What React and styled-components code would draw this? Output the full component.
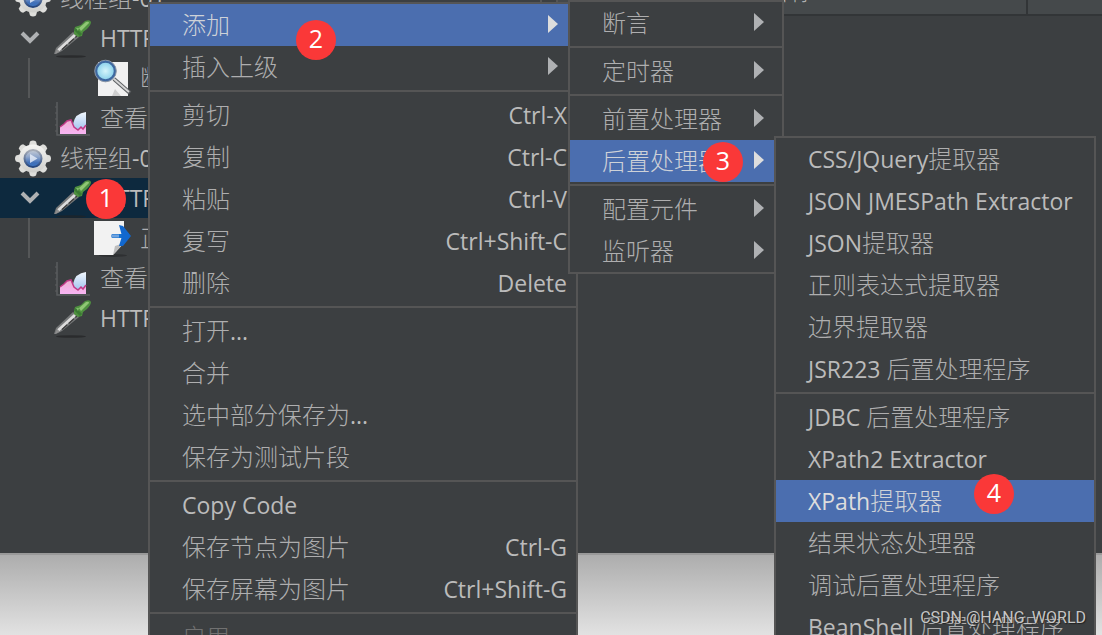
import React from "react";
import styled, { createGlobalStyle, css } from "styled-components";

const GlobalStyle = createGlobalStyle`
  * { box-sizing: border-box; }
  body {
    margin: 0;
    background: #3c3f41;
    color: #bbbbbb;
    font: 23px/40px "Open Sans", "Noto Sans CJK SC", sans-serif;
  }
  ul { list-style: none; margin: 0; padding: 0; }
  button { font: inherit; color: inherit; background: none; border: 0; padding: 0; }
`;

const Page = styled.div`
  position: relative;
  display: flex;
  flex-direction: column;
  height: 100vh;
  overflow: hidden;
`;

const Workspace = styled.main`
  flex: 1;
  min-height: 0;
  display: flex;
  border-bottom: 2px solid #999999;
`;

const Desktop = styled.footer`
  flex: 0 0 80px;
  background: linear-gradient(#adadad, #e2e2e2);
`;

const TreePane = styled.nav`
  flex: 0 0 49%;
  overflow: hidden;
`;

const Tree = styled.ul`
  margin-top: -22px;
`;

const TreeRow = styled.li`
  display: flex;
  align-items: center;
  height: 40px;
  padding-left: ${(p) => 13 + 40 * p.$level}px;
  white-space: nowrap;
  background: ${(p) => (p.$selected ? "#0d293e" : "transparent")};
`;

const Toggle = styled.button`
  display: flex;
  justify-content: center;
  width: 34px;
  margin-right: 6px;
`;

const Guide = styled.span`
  width: 2px;
  height: 40px;
  margin-left: 15px;
  margin-right: 63px;
  background: #555758;
`;

const TreeLabel = styled.span`
  margin-left: 7px;
`;

const Splitter = styled.div`
  flex: 0 0 18px;
  border: solid #555555;
  border-width: 0 2px;
`;

const Editor = styled.section`
  flex: 1;
  min-width: 0;
`;

const ColumnHeader = styled.div`
  display: flex;
  height: 16px;
  overflow: hidden;
  background: #45494b;
  border-bottom: 2px solid #323537;
`;

const ColumnCell = styled.div`
  flex: ${(p) => (p.$last ? "0 0 76px" : "1")};
  display: flex;
  align-items: flex-end;
  justify-content: center;
  line-height: 24px;
  padding-bottom: 11px;
  border-left: ${(p) => (p.$last ? "2px solid #323537" : "0")};
`;

const Menu = styled.ul`
  position: absolute;
  left: ${(p) => p.$left}px;
  top: ${(p) => p.$top}px;
  width: ${(p) => p.$width}px;
  background: #3c3f41;
  border: 2px solid #555555;
`;

const MenuItem = styled.button`
  display: flex;
  justify-content: space-between;
  align-items: center;
  width: 100%;
  height: 42px;
  padding: 0 9px 0 32px;
  text-align: left;
  white-space: nowrap;
  ${(p) => p.$active && css`background: #4b6eaf; color: #dddddd;`}
  &:disabled { color: #777777; }
`;

const Separator = styled.li`
  height: 6px;
  border: solid #3c3f41;
  border-width: 2px 0;
  background: #555555;
`;

const Han = styled.span`
  font-family: "Noto Sans CJK SC", sans-serif;
  font-size: 24px;
  font-weight: 300;
  line-height: 24px;
  opacity: 0.9;
`;

const ArrowSvg = styled.svg`
  margin: 0 9px 2px 0;
  fill: ${(p) => (p.$active ? "#dddddd" : "#afb1b3")};
`;

const Badge = styled.span`
  position: absolute;
  left: ${(p) => p.$left}px;
  top: ${(p) => p.$top}px;
  width: 40px;
  height: 40px;
  border-radius: 50%;
  background: #fa3838;
  color: #ffffff;
  font-size: 25px;
  line-height: 36px;
  text-align: center;
`;

const Watermark = styled.span`
  position: absolute;
  right: 16px;
  bottom: 7px;
  font: 16px/20px Roboto, "Liberation Sans", sans-serif;
  color: #c6c6c6;
  text-shadow: 1px 1px 1px #222222;
`;

function Label({ children }) {
  return (
    <span>
      {children.split(/([\u4e00-\u9fff]+)/).map((run, i) =>
        i % 2 ? <Han key={i}>{run}</Han> : run
      )}
    </span>
  );
}

const Arrow = ({ active }) => (
  <ArrowSvg width="10" height="18" viewBox="0 0 10 18" $active={active}>
    <path d="M0 0L10 9L0 18Z" />
  </ArrowSvg>
);

const Chevron = () => (
  <svg width="20" height="14" viewBox="0 0 20 14" fill="none" stroke="#afb1b3" strokeWidth="4">
    <path d="M2 2L10 10L18 2" />
  </svg>
);

const teeth = [0, 45, 90, 135, 180, 225, 270, 315];

const GearIcon = () => (
  <svg width="40" height="40" viewBox="0 0 40 40">
    <defs>
      <linearGradient id="gearBody" x1="0" y1="0" x2="0" y2="1">
        <stop offset="0" stopColor="#f4f4f2" />
        <stop offset="1" stopColor="#cfcfcc" />
      </linearGradient>
      <linearGradient id="gearBall" x1="0" y1="0" x2="0" y2="1">
        <stop offset="0" stopColor="#c6ccd6" />
        <stop offset="0.4" stopColor="#8fa6cb" />
        <stop offset="0.75" stopColor="#3f6fb8" />
        <stop offset="1" stopColor="#3c76c4" />
      </linearGradient>
      <linearGradient id="gearRim" x1="0" y1="0" x2="0" y2="1">
        <stop offset="0" stopColor="#a9aeb8" />
        <stop offset="1" stopColor="#23457f" />
      </linearGradient>
    </defs>
    {teeth.map((a) => (
      <path key={a} d="M15.500 9L17 3.500Q20 1.500 23 3.500L24.500 9Z" fill="#dededb" transform={`rotate(${a} 20 20.500)`} />
    ))}
    <circle cx="20" cy="20.500" r="14" fill="url(#gearBody)" />
    <circle cx="20" cy="20.500" r="8.500" fill="url(#gearBall)" stroke="url(#gearRim)" strokeWidth="2" />
    <path d="M17 16L24.500 20.500L17 25Z" fill="#e9effa" opacity="0.8" />
  </svg>
);

const DropperIcon = () => (
  <svg width="40" height="40" viewBox="0 0 40 40">
    <ellipse cx="18" cy="38.500" rx="15" ry="1.300" fill="#222425" opacity="0.7" />
    <path d="M1 36L3 30L20 14L26 19L9 33L3 36Z" fill="#77797a" />
    <path d="M5 32.500L22 17" stroke="#dcdcdc" strokeWidth="3" />
    <path d="M9 31.500L24 18" stroke="#3b3b3b" strokeWidth="1.200" strokeDasharray="7 2" />
    <path d="M2 36L4 31L7 33.500Z" fill="#8f8f8f" />
    <path d="M21 13L22 9L28 7L32 3Q37 1 38 4Q38 7 34 11L30 14L29 18L25 19L21 16Z" fill="#4f9140" />
    <path d="M26 10L33 4Q36 3 36 5L28 13Z" fill="#8fc774" />
    <path d="M22 11L28 17" stroke="#3a7a32" strokeWidth="3" />
    <path d="M23 10L26 10L25 13Z" fill="#7fb96a" />
  </svg>
);

const MagnifierIcon = () => (
  <svg width="40" height="40" viewBox="0 0 40 40">
    <defs>
      <radialGradient id="lens">
        <stop offset="0" stopColor="#d5f5fb" />
        <stop offset="1" stopColor="#86cfea" />
      </radialGradient>
    </defs>
    <path d="M5 4H35V38H5Z" fill="#f1f1f1" />
    <path d="M22 31L28 38H19Z" fill="#cfcfcf" />
    <path d="M21 21L37 35" stroke="#5c5f62" strokeWidth="4" />
    <path d="M21 21L36 34" stroke="#d5d5d5" strokeWidth="2" />
    <circle cx="12.500" cy="13" r="9.500" fill="url(#lens)" stroke="#3e68a0" strokeWidth="2.500" />
    <circle cx="12.500" cy="13" r="10.800" fill="none" stroke="#8a95a5" />
  </svg>
);

const PageArrowIcon = () => (
  <svg width="40" height="40" viewBox="0 0 40 40">
    <ellipse cx="20" cy="37.500" rx="14" ry="1.500" fill="#252728" opacity="0.6" />
    <path d="M1 3H31V25L20 37H1Z" fill="#f2f2f2" />
    <path d="M20 37L22 28L31 25Z" fill="#bdbdbd" />
    <path d="M19 18H32" stroke="#1570d0" strokeWidth="4" />
    <path d="M26 7L30 8L38 18L30 28L26 28L29 18Z" fill="#1268cf" />
    <path d="M18 18H26" stroke="#70a4df" strokeWidth="3" />
  </svg>
);

const ChartIcon = () => (
  <svg width="40" height="40" viewBox="0 0 40 40">
    <defs>
      <linearGradient id="areaBlue" x1="0" y1="0" x2="0" y2="1">
        <stop offset="0" stopColor="#f2f7fd" />
        <stop offset="1" stopColor="#8fb9ec" />
      </linearGradient>
      <linearGradient id="areaPink" x1="0" y1="0" x2="0" y2="1">
        <stop offset="0" stopColor="#efb0cf" />
        <stop offset="1" stopColor="#f8b4f4" />
      </linearGradient>
    </defs>
    <path d="M4 4V37H37" fill="none" stroke="#5a5d5f" strokeWidth="1.500" />
    <path d="M2 9H4M2 15H4M2 21H4M2 27H4M2 33H4" stroke="#5a5d5f" />
    <path d="M20 26Q22 15 33 14V36H20Z" fill="url(#areaBlue)" />
    <path d="M7 36V29L11 26L14 23L18 22L21 29L25 32L28 29L30 31L33 27V36Z" fill="url(#areaPink)" />
    <path d="M7 29L11 26L14 23L18 22L21 29L25 32L28 29L30 31L33 27" fill="none" stroke="#c23a87" strokeWidth="1.500" />
  </svg>
);

const treeRows = [
  { level: 0, icon: GearIcon, text: "线程组-01" },
  { level: 1, icon: DropperIcon, text: "HTTP请求", open: true },
  { level: 2, icon: MagnifierIcon, text: "断言" },
  { level: 1, icon: ChartIcon, text: "查看结果树" },
  { level: 0, icon: GearIcon, text: "线程组-02" },
  { level: 1, icon: DropperIcon, text: "HTTP请求", open: true, selected: true },
  { level: 2, icon: PageArrowIcon, text: "正则" },
  { level: 1, icon: ChartIcon, text: "查看结果树" },
  { level: 1, icon: DropperIcon, text: "HTTP请求" },
];

const mainItems = [
  { text: "添加", sub: true, active: true },
  { text: "插入上级", sub: true },
  null,
  { text: "剪切", keys: "Ctrl-X" },
  { text: "复制", keys: "Ctrl-C" },
  { text: "粘贴", keys: "Ctrl-V" },
  { text: "复写", keys: "Ctrl+Shift-C" },
  { text: "删除", keys: "Delete" },
  null,
  { text: "打开..." },
  { text: "合并" },
  { text: "选中部分保存为..." },
  { text: "保存为测试片段" },
  null,
  { text: "Copy Code" },
  { text: "保存节点为图片", keys: "Ctrl-G" },
  { text: "保存屏幕为图片", keys: "Ctrl+Shift-G" },
  null,
  { text: "启用", disabled: true },
];

const addItems = [
  { text: "断言", sub: true },
  null,
  { text: "定时器", sub: true },
  null,
  { text: "前置处理器", sub: true },
  { text: "后置处理器", sub: true, active: true },
  null,
  { text: "配置元件", sub: true },
  { text: "监听器", sub: true },
];

const extractorItems = [
  { text: "CSS/JQuery提取器" },
  { text: "JSON JMESPath Extractor" },
  { text: "JSON提取器" },
  { text: "正则表达式提取器" },
  { text: "边界提取器" },
  { text: "JSR223 后置处理程序" },
  null,
  { text: "JDBC 后置处理程序" },
  { text: "XPath2 Extractor" },
  { text: "XPath提取器", active: true },
  { text: "结果状态处理器" },
  { text: "调试后置处理程序" },
  { text: "BeanShell 后置处理程序" },
];

function PopupMenu({ items, left, top, width }) {
  return (
    <Menu $left={left} $top={top} $width={width}>
      {items.map((item, i) =>
        item ? (
          <li key={i}>
            <MenuItem type="button" $active={item.active} disabled={item.disabled}>
              <Label>{item.text}</Label>
              {item.keys && <span>{item.keys}</span>}
              {item.sub && <Arrow active={item.active} />}
            </MenuItem>
          </li>
        ) : (
          <Separator key={i} role="separator" />
        )
      )}
    </Menu>
  );
}

export default function App() {
  return (
    <Page>
      <GlobalStyle />
      <Workspace>
        <TreePane>
          <Tree>
            {treeRows.map(({ level, icon: Icon, text, open, selected }, i) => (
              <TreeRow key={i} $level={open || level === 2 ? 0 : level} $selected={selected}>
                {open && (
                  <Toggle type="button" aria-label="折叠">
                    <Chevron />
                  </Toggle>
                )}
                {level === 2 && <Guide />}
                <Icon />
                <TreeLabel>
                  <Label>{text}</Label>
                </TreeLabel>
              </TreeRow>
            ))}
          </Tree>
        </TreePane>
        <Splitter />
        <Editor>
          <ColumnHeader>
            <ColumnCell>
              <Label>名称:</Label>
            </ColumnCell>
            <ColumnCell $last />
          </ColumnHeader>
        </Editor>
      </Workspace>
      <Desktop />
      <PopupMenu items={mainItems} left={148} top={2} width={430} />
      <PopupMenu items={addItems} left={568} top={0} width={216} />
      <PopupMenu items={extractorItems} left={774} top={136} width={322} />
      <Badge $left={86} $top={179}>1</Badge>
      <Badge $left={296} $top={20}>2</Badge>
      <Badge $left={703} $top={142}>3</Badge>
      <Badge $left={974} $top={474}>4</Badge>
      <Watermark>CSDN @HANG_WORLD</Watermark>
    </Page>
  );
}
